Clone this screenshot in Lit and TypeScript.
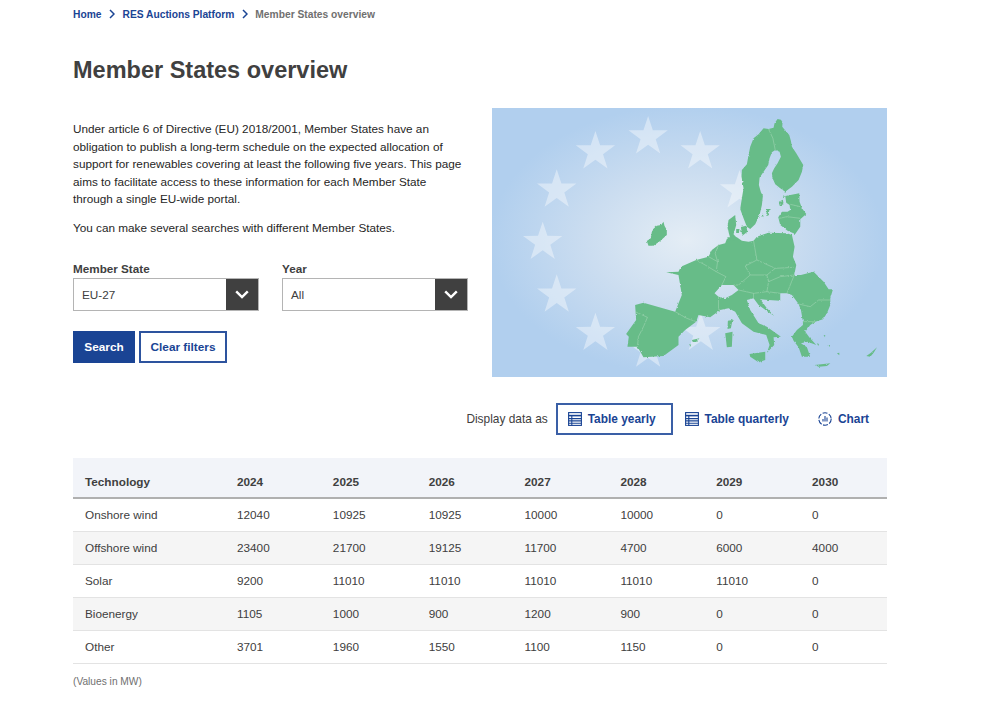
import { LitElement, html, css, svg } from "lit";
import { customElement } from "lit/decorators.js";

const star = (cx: number, cy: number) => {
  const r = 62, q = 24;
  const pts: string[] = [];
  for (let i = 0; i < 10; i++) {
    const a = -Math.PI / 2 + (i * Math.PI) / 5;
    const rad = i % 2 ? q : r;
    pts.push(`${(cx + rad * Math.cos(a)).toFixed(1)},${(cy + rad * Math.sin(a)).toFixed(1)}`);
  }
  return svg`<polygon class="star" points=${pts.join(" ")}></polygon>`;
};

const stars: [number, number][] = [
  [474, 95], [630, 140], [748, 257], [316, 140], [200, 255], [158, 412],
  [200, 570], [316, 685], [474, 735], [632, 685],
];

// Shift helper: traced coordinates are relative to a crop of the map.
const p = (pts: number[][], dx = 0, dy = 0, close = true) =>
  "M" + pts.map(([x, y]) => `${x + dx} ${y + dy}`).join("L") + (close ? "Z" : "");

const MX = 360, MY = 375;

const mainland = [
  [325,45],[345,40],[352,22],[380,22],[395,32],[415,35],[430,32],[440,20],[475,8],[530,10],[545,15],[553,50],[548,80],[558,105],[552,135],
  [572,135],[610,125],[625,140],[640,155],[655,178],[668,178],[660,205],[660,225],[650,250],[638,268],[615,275],[600,285],[585,305],[597,322],[618,345],[592,335],[572,340],[590,352],[600,380],[575,380],[565,352],[550,332],[545,320],[560,300],[578,285],
  [578,275],[572,240],[565,222],[545,195],[530,190],[510,190],[510,212],[475,210],[450,208],[470,235],[492,258],[470,243],[445,225],[430,205],[410,210],[420,240],[445,280],[470,290],[512,320],[490,322],[492,345],[470,368],[478,345],[468,315],[430,305],[395,280],[375,245],[355,235],[330,240],[300,262],[265,255],[258,275],[225,300],[205,320],[205,345],[160,378],[100,382],[82,350],[52,350],[56,320],[48,312],[78,270],[75,225],[100,218],[195,245],[215,195],[205,135],[168,127],[205,125],[212,110],[258,90],[295,80],[305,60],
];
const swiss = [[313,190],[335,165],[370,165],[385,180],[365,195],[345,205],[325,200]];

const landPaths: string[] = [
  // Mainland with Switzerland as a hole
  p(mainland, MX, MY) + p(swiss, MX, MY),
  // Sweden + Finland
  p([[862,42],[872,44],[877,52],[876,65],[884,75],[897,90],[902,108],[905,125],[918,145],[930,165],[939,180],[935,200],[925,225],[905,245],[885,260],[870,250],[855,238],[847,220],[845,205],[852,190],[862,175],[872,155],[868,140],[855,135],[845,142],[838,160],[834,180],[820,200],[808,218],[806,240],[812,262],[818,272],[815,300],[808,330],[795,358],[780,372],[770,365],[760,340],[750,312],[755,280],[760,250],[754,215],[755,195],[770,178],[775,150],[780,125],[790,100],[805,88],[820,70],[835,72],[850,68],[853,55]]),
  // Baltics
  p([[885,273],[927,265],[928,290],[935,310],[948,327],[930,343],[930,365],[915,387],[892,377],[870,360],[864,337],[875,320],[892,320],[900,315],[898,300],[888,293]]),
  // Denmark
  p([[712,365],[715,345],[735,330],[738,360],[730,388],[745,404],[722,406],[716,385]]),
  p([[752,366],[768,362],[772,380],[756,392]]),
  p([[738,372],[748,372],[746,384],[738,384]]),
  // Ireland
  p([[470,408],[482,400],[486,375],[500,362],[513,360],[520,350],[523,362],[530,375],[530,390],[510,408],[490,422],[475,422]]),
  // Sicily, Sardinia, Corsica
  p([[418,372],[465,365],[465,390],[445,397],[420,380]], MX, MY),
  p([[345,310],[367,305],[365,350],[350,352]], MX, MY),
  p([[353,272],[367,270],[362,295],[352,297]], MX, MY),
  // Balearics
  p([[245,330],[268,325],[258,336],[248,336]], MX, MY),
  p([[237,345],[243,343],[241,350]], MX, MY),
  // Crete, Cyprus, Rhodes and small Aegean islands
  p([[613,405],[660,400],[650,408],[625,410]], MX, MY),
  p([[768,378],[782,368],[800,352],[790,368],[780,380]], MX, MY),
  p([[680,370],[687,368],[687,376]], MX, MY),
  p([[640,315],[645,316],[644,322]], MX, MY),
  p([[655,345],[660,346],[658,351]], MX, MY),
  p([[620,340],[626,342],[624,348]], MX, MY),
  // Gotland, Oland, Aland, Estonian islands
  p([[830,312],[838,312],[834,332],[828,332]]),
  p([[814,335],[818,325],[820,340]]),
  p([[866,290],[878,284],[880,298],[868,302]]),
  p([[880,270],[884,276],[878,280]]),
];

// Lines in the map between neighbouring countries, in mainland coordinates.
const borders: number[][][] = [
  [[325,45],[315,70],[322,95],[318,125]],
  [[295,80],[322,95]],
  [[258,90],[285,105],[318,125],[347,140],[335,165]],
  [[430,32],[440,90],[405,108],[420,135],[385,165],[370,165]],
  [[440,90],[495,115],[550,112]],
  [[495,115],[470,135],[420,135]],
  [[470,135],[475,155],[470,185],[430,190],[385,180]],
  [[475,155],[510,140],[552,135],[530,190]],
  [[430,190],[430,205]],
  [[470,185],[510,190]],
  [[565,222],[600,230],[625,210],[660,210]],
  [[578,275],[615,275]],
  [[75,245],[112,262],[100,290],[85,320],[82,350]],
  [[195,245],[230,265],[258,275]],
  [[325,200],[325,235],[330,240]],
];
const northBorders: number[][][] = [
  [[835,72],[848,100],[855,135]],
  [[900,298],[930,305]],
  [[867,340],[890,335],[930,340]],
];

const tableIcon = svg`<svg class="ic" viewBox="0 0 14 14" fill="none" stroke="currentColor" stroke-width="1.1"><rect x="0.6" y="0.6" width="12.8" height="12.8"/><path d="M0.6 3.6H13.4" stroke-width="1.6"/><path d="M0.6 6.6H13.4M0.6 8.9H13.4M0.6 11.2H13.4M3.8 3.6V13.4"/></svg>`;
const chartIcon = svg`<svg class="ic" viewBox="0 0 14 14" fill="none" stroke="currentColor" stroke-width="1.1"><circle cx="7" cy="7" r="6.2" stroke-dasharray="5 1.5"/><path d="M5 7V9.5M7 4V9.5M9 5.5V9.5"/></svg>`;
const chevron = svg`<svg class="chev" viewBox="0 0 14 9" fill="none" stroke="#fff" stroke-width="2.4"><path d="M1.2 1.3L7 7L12.8 1.3"/></svg>`;
const crumbSep = svg`<svg class="sep" viewBox="0 0 6 10" fill="none" stroke="#1a4494" stroke-width="1.5"><path d="M1 1L5 5L1 9"/></svg>`;

const years = ["2024", "2025", "2026", "2027", "2028", "2029", "2030"];
const rows: [string, ...number[]][] = [
  ["Onshore wind", 12040, 10925, 10925, 10000, 10000, 0, 0],
  ["Offshore wind", 23400, 21700, 19125, 11700, 4700, 6000, 4000],
  ["Solar", 9200, 11010, 11010, 11010, 11010, 11010, 0],
  ["Bioenergy", 1105, 1000, 900, 1200, 900, 0, 0],
  ["Other", 3701, 1960, 1550, 1100, 1150, 0, 0],
];

@customElement("app-root")
export class AppRoot extends LitElement {
  static styles = css`
    :host {
      display: block;
      height: 704px;
      background: #fff;
      color: #404040;
      font-family: "Liberation Sans", Arial, sans-serif;
      overflow: hidden;
    }
    .page { width: 814px; margin-left: 73px; }
    .crumbs {
      display: flex; align-items: center; height: 12px; padding-top: 8px;
      font-size: 10.25px; font-weight: 700; color: #1a4494;
    }
    .sep { width: 6px; height: 10px; margin: 0 7.5px; }
    .crumbs .cur { color: #707070; }
    h1 { margin: 0; padding-top: 30px; font-size: 23.5px; line-height: 40px; font-weight: 700; color: #404040; }
    .top { display: grid; grid-template-columns: 395px 395px; column-gap: 24px; margin-top: 18px; }
    .intro p { margin: 0; font-size: 11.75px; line-height: 17.6px; color: #262626; }
    .intro { padding-top: 12px; }
    .intro p + p { margin-top: 11.5px; }
    .filters { display: grid; grid-template-columns: 186px 186px; column-gap: 23px; margin-top: 24px; }
    .filters label { display: block; font-size: 11.7px; font-weight: 700; line-height: 16px; margin-bottom: 1px; }
    .select {
      display: flex; justify-content: space-between; height: 33px; box-sizing: border-box;
      border: 1px solid #b4b4b4; font-size: 11.75px; color: #404040; align-items: stretch;
    }
    .select span { align-self: center; padding-left: 8px; }
    .arrow { width: 32px; background: #404040; display: flex; align-items: center; justify-content: center; }
    .chev { width: 14px; height: 9px; }
    .btns { display: flex; gap: 4px; margin-top: 20px; }
    .btn {
      height: 32px; box-sizing: border-box; display: flex; align-items: center; justify-content: center;
      font-size: 11.8px; font-weight: 700; border: 2px solid #2d539e; color: #1a4494;
    }
    .btn.search { width: 62px; background: #1a4494; border-color: #1a4494; color: #fff; }
    .btn.clear { width: 88px; background: #fff; }
    .map { display: block; width: 395px; height: 269px; }
    .star { fill: #fff; fill-opacity: 0.4; }
    .land { fill: #67bc88; fill-rule: evenodd; }
    .border { fill: none; stroke: #a6d8b8; stroke-width: 1.6; stroke-linejoin: round; }
    .display { display: flex; justify-content: flex-end; align-items: center; height: 32px; margin-top: 26px; font-size: 11.9px; }
    .display .lbl { margin-right: 8px; }
    .tab {
      display: flex; align-items: center; gap: 6px; height: 32px; box-sizing: border-box;
      padding: 0 15px 0 10px; color: #1a4494; font-weight: 700; border: 2px solid transparent;
    }
    .tab:last-child { padding-right: 16px; }
    .tab.on { border-color: #3a5fa6; }
    .ic { width: 14px; height: 14px; flex: none; }
    table { border-collapse: collapse; table-layout: fixed; width: 814px; margin-top: 23px; font-size: 11.75px; }
    .c0 { width: 164px; }
    .cy { width: 95.85px; }
    th {
      height: 40px; box-sizing: border-box; text-align: left; padding: 7px 0 0 0; background: #f2f4f9;
      border-bottom: 2px solid #b0b0b0; font-weight: 700; color: #404040;
    }
    td { height: 33px; box-sizing: border-box; padding: 0; border-bottom: 1px solid #e3e3e3; color: #404040; }
    th:first-child, td:first-child { padding-left: 12px; }
    tbody tr:nth-child(even) td { background: #f5f5f5; }
    .note { margin-top: 11px; font-size: 10.2px; line-height: 13px; color: #707070; }
  `;

  render() {
    return html`
      <div class="page">
        <nav class="crumbs">
          <span>Home</span>${crumbSep}<span>RES Auctions Platform</span>${crumbSep}<span class="cur">Member States overview</span>
        </nav>
        <h1>Member States overview</h1>
        <div class="top">
          <div>
            <div class="intro">
              <p>Under article 6 of Directive (EU) 2018/2001, Member States have an<br />obligation to publish a long-term schedule on the expected allocation of<br />support for renewables covering at least the following five years. This page<br />aims to facilitate access to these information for each Member State<br />through a single EU-wide portal.</p>
              <p>You can make several searches with different Member States.</p>
            </div>
            <div class="filters">
              <div>
                <label>Member State</label>
                <div class="select"><span>EU-27</span><div class="arrow">${chevron}</div></div>
              </div>
              <div>
                <label>Year</label>
                <div class="select"><span>All</span><div class="arrow">${chevron}</div></div>
              </div>
            </div>
            <div class="btns">
              <div class="btn search">Search</div>
              <div class="btn clear">Clear filters</div>
            </div>
          </div>
          <svg class="map" viewBox="6 9 1184 807" preserveAspectRatio="none">
            <defs>
              <radialGradient id="bg" gradientUnits="userSpaceOnUse" cx="0" cy="0" r="1" gradientTransform="translate(590 405) scale(590 405)">
                <stop offset="0" stop-color="#e4edf5"></stop>
                <stop offset="0.5" stop-color="#cbddf0"></stop>
                <stop offset="1" stop-color="#b1cfee"></stop>
              </radialGradient>
              <filter id="rough" x="-5%" y="-5%" width="110%" height="110%" color-interpolation-filters="sRGB">
                <feTurbulence type="fractalNoise" baseFrequency="0.12" numOctaves="2" seed="4" result="n"></feTurbulence>
                <feDisplacementMap in="SourceGraphic" in2="n" scale="7" xChannelSelector="R" yChannelSelector="G"></feDisplacementMap>
              </filter>
            </defs>
            <rect x="6" y="9" width="1184" height="807" fill="url(#bg)"></rect>
            ${stars.map(([x, y]) => star(x, y))}
            <g filter="url(#rough)">
              ${landPaths.map((d) => svg`<path class="land" d=${d}></path>`)}
              ${borders.map((b) => svg`<path class="border" d=${p(b, MX, MY, false)}></path>`)}
              ${northBorders.map((b) => svg`<path class="border" d=${p(b, 0, 0, false)}></path>`)}
            </g>
          </svg>
        </div>
        <div class="display">
          <span class="lbl">Display data as</span>
          <div class="tab on">${tableIcon}<span>Table yearly</span></div>
          <div class="tab">${tableIcon}<span>Table quarterly</span></div>
          <div class="tab">${chartIcon}<span>Chart</span></div>
        </div>
        <table>
          <colgroup>
            <col class="c0" />
            ${years.slice(0, 6).map(() => html`<col class="cy" />`)}
            <col />
          </colgroup>
          <thead>
            <tr><th>Technology</th>${years.map((y) => html`<th>${y}</th>`)}</tr>
          </thead>
          <tbody>
            ${rows.map(([name, ...vals]) => html`<tr><td>${name}</td>${vals.map((v) => html`<td>${v}</td>`)}</tr>`)}
          </tbody>
        </table>
        <div class="note">(Values in MW)</div>
      </div>
    `;
  }
}
